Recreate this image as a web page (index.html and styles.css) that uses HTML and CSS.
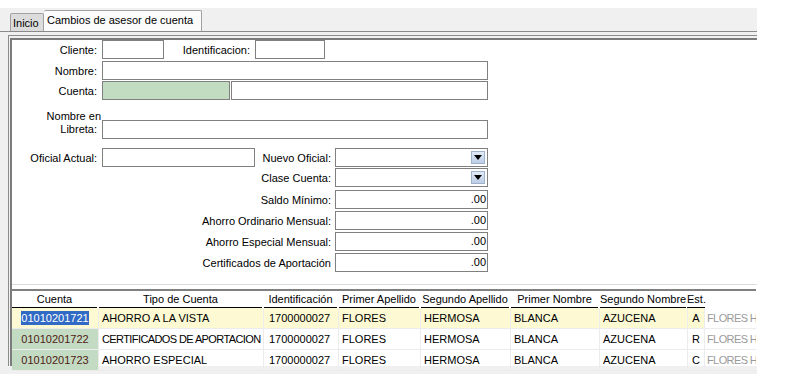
FILE: index.html
```html
<!DOCTYPE html>
<html lang="es">
<head>
<meta charset="utf-8">
<title>Cambios de asesor de cuenta</title>
<link rel="stylesheet" href="styles.css">
</head>
<body>
<div class="window">
  <div class="tabstrip">
    <div class="tab tab-inicio">Inicio</div>
    <div class="tab tab-active">Cambios de asesor de cuenta</div>
  </div>
  <div class="frame">
    <div class="frame-inner">
      <div class="form">
        <div class="row r1">
          <label class="lbl">Cliente:</label>
          <div class="field w-cliente"></div>
          <label class="lbl lbl-ident">Identificacion:</label>
          <div class="field w-ident"></div>
        </div>
        <div class="row r2">
          <label class="lbl">Nombre:</label>
          <div class="field w-full"></div>
        </div>
        <div class="row r3">
          <label class="lbl">Cuenta:</label>
          <div class="field w-cuenta green"></div>
          <div class="field w-cuenta2"></div>
        </div>
        <div class="row r4">
          <label class="lbl lbl-two"><span class="first-line">Nombre en</span><br>Libreta:</label>
          <div class="field w-full"></div>
        </div>
        <div class="row r5">
          <label class="lbl">Oficial Actual:</label>
          <div class="field w-oficial"></div>
          <label class="lbl lbl-nuevo">Nuevo Oficial:</label>
          <div class="field w-right select"><span class="dd"><svg width="8" height="5" viewBox="0 0 8 5"><path d="M0 0H8L4 5Z" fill="#000"/></svg></span></div>
        </div>
        <div class="row r6">
          <label class="lbl lbl-wide">Clase Cuenta:</label>
          <div class="field w-right select"><span class="dd"><svg width="8" height="5" viewBox="0 0 8 5"><path d="M0 0H8L4 5Z" fill="#000"/></svg></span></div>
        </div>
        <div class="row r7">
          <label class="lbl lbl-wide">Saldo Mínimo:</label>
          <div class="field w-right num">.00</div>
        </div>
        <div class="row r8">
          <label class="lbl lbl-wide">Ahorro Ordinario Mensual:</label>
          <div class="field w-right num">.00</div>
        </div>
        <div class="row r8">
          <label class="lbl lbl-wide">Ahorro Especial Mensual:</label>
          <div class="field w-right num">.00</div>
        </div>
        <div class="row r8">
          <label class="lbl lbl-wide">Certificados de Aportación</label>
          <div class="field w-right num">.00</div>
        </div>
      </div>
      <div class="sep"></div>
      <div class="grid-wrap">
        <div class="grid">
          <div class="th c">Cuenta</div>
          <div class="th c">Tipo de Cuenta</div>
          <div class="th c">Identificación</div>
          <div class="th c">Primer Apellido</div>
          <div class="th c">Segundo Apellido</div>
          <div class="th c">Primer Nombre</div>
          <div class="th c">Segundo Nombre</div>
          <div class="th th-est">Est.</div>
          <div class="th th-blank"></div>

          <div class="td cta yel"><span class="sel">01010201721</span></div>
          <div class="td yel">AHORRO A LA VISTA</div>
          <div class="td idn yel">1700000027</div>
          <div class="td yel">FLORES</div>
          <div class="td yel">HERMOSA</div>
          <div class="td yel">BLANCA</div>
          <div class="td yel">AZUCENA</div>
          <div class="td est yel">A</div>
          <div class="td extra">FLORES H</div>

          <div class="td cta green-cell">01010201722</div>
          <div class="td tight">CERTIFICADOS DE APORTACION</div>
          <div class="td idn">1700000027</div>
          <div class="td">FLORES</div>
          <div class="td">HERMOSA</div>
          <div class="td">BLANCA</div>
          <div class="td">AZUCENA</div>
          <div class="td est">R</div>
          <div class="td extra">FLORES H</div>

          <div class="td cta green-cell">01010201723</div>
          <div class="td">AHORRO ESPECIAL</div>
          <div class="td idn">1700000027</div>
          <div class="td">FLORES</div>
          <div class="td">HERMOSA</div>
          <div class="td">BLANCA</div>
          <div class="td">AZUCENA</div>
          <div class="td est">C</div>
          <div class="td extra">FLORES H</div>
        </div>
      </div>
    </div>
  </div>
</div>
</body>
</html>
```

FILE: styles.css
```css
* { box-sizing: border-box; }
html, body { margin: 0; padding: 0; background: #ffffff; }
body {
  padding-top: 8px;
  font-family: "Liberation Sans", Arial, sans-serif;
  font-size: 11px;
  color: #000;
  height: 374px;
  overflow: hidden;
}
.window {
  width: 757px;
  background: #f0f0f0;
  height: 366px;
}
.tabstrip {
  display: flex;
  align-items: flex-end;
  height: 24px;
  padding-left: 10px;
  border-bottom: 1px solid #8a8a8a;
}
.tab {
  border: 1px solid #a2a2a2;
  border-bottom: none;
  border-radius: 2px 2px 0 0;
  padding: 0 3px;
  white-space: nowrap;
}
.tab-inicio {
  height: 18px;
  line-height: 19px;
  background: #dcdcdc;
  width: 34px;
  padding-left: 2px;
}
.tab-active {
  height: 21px;
  line-height: 18px;
  background: #fbfbfb;
  width: 158px;
  border-left: none;
}
.frame {
  margin-top: 3px;
  margin-left: 8px;
  border-top: 1px solid #8c8c8c;
  border-left: 1px solid #8c8c8c;
  height: 331px;
}
.frame-inner {
  margin-top: 2px;
  margin-left: 1px;
  border-top: 2px solid #7c7c7c;
  border-left: 2px solid #7c7c7c;
  background: #fff;
  height: 328px;
}
.form { display: flex; flex-direction: column; }
.row { display: flex; align-items: center; height: 19px; }
.r1 { margin-top: 0; }
.r2 { margin-top: 2px; }
.r3 { margin-top: 1px; }
.r4 { margin-top: 10px; height: 29px; align-items: flex-end; }
.r5 { margin-top: 9px; }
.r6 { margin-top: 1px; }
.r7 { margin-top: 3px; }
.r8 { margin-top: 2px; }
.lbl {
  width: 85px;
  text-align: right;
  margin-right: 5px;
  white-space: nowrap;
}
.lbl-two {
  align-self: flex-start;
  line-height: 13px;
}
.first-line { margin-right: -4px; }
.lbl-ident { width: 86px; }
.lbl-nuevo { width: 76px; margin-right: 4px; }
.lbl-wide { width: 319px; margin-right: 4px; }
.field {
  height: 19px;
  border: 1px solid #808080;
  background: #fff;
}
.w-cliente { width: 62px; }
.w-ident { width: 70px; }
.w-full { width: 386px; }
.w-cuenta { width: 128px; }
.w-cuenta2 { width: 257px; margin-left: 1px; }
.green { background: #c2dcc2; }
.w-oficial { width: 153px; }
.w-right { width: 153px; }
.num {
  text-align: right;
  line-height: 17px;
  padding-right: 1px;
}
.select {
  display: flex;
  align-items: center;
  justify-content: flex-end;
  padding-right: 2px;
}
.dd {
  width: 14px;
  height: 13px;
  border: 1px solid #9fb2cc;
  background: linear-gradient(#e2ebf7, #bccde6);
  display: flex;
  align-items: center;
  justify-content: center;
}
.sep {
  margin-top: 12px;
  height: 1px;
  background: #dcdcdc;
}
.grid-wrap {
  margin-top: 4px;
  width: 744px;
  overflow: hidden;
  border-top: 2px solid #808080;
}
.grid {
  display: grid;
  grid-template-columns: 87px 165px 75px 82px 90px 89px 88px 17px 51px;
  width: 744px;
}
.th {
  height: 17px;
  line-height: 16px;
  border-bottom: 1px solid #000;
  margin-right: 2px;
  white-space: nowrap;
  overflow: hidden;
}
.th.c { text-align: center; }
.th-est { margin-right: 0; margin-left: -1px; overflow: visible; }
.th-blank { border-bottom: none; }
.td {
  height: 21px;
  line-height: 20px;
  padding-left: 3px;
  border-right: 1px solid #ececec;
  border-bottom: 1px solid #ececec;
  white-space: nowrap;
  overflow: hidden;
  color: #000;
}
.tight { letter-spacing: -0.6px; }
.idn { padding-left: 5px; }
.yel { background: #fcf9d3; }
.cta { text-align: center; padding-left: 0; }
.green-cell { background: #c3dbc3; color: #4e1a14; }
.sel {
  background: #316ac5;
  color: #fff;
  padding: 1px 0;
}
.est { text-align: center; padding-left: 0; }
.extra { color: #9a9a9a; padding-left: 2px; border-right: none; letter-spacing: -0.6px; }
```
